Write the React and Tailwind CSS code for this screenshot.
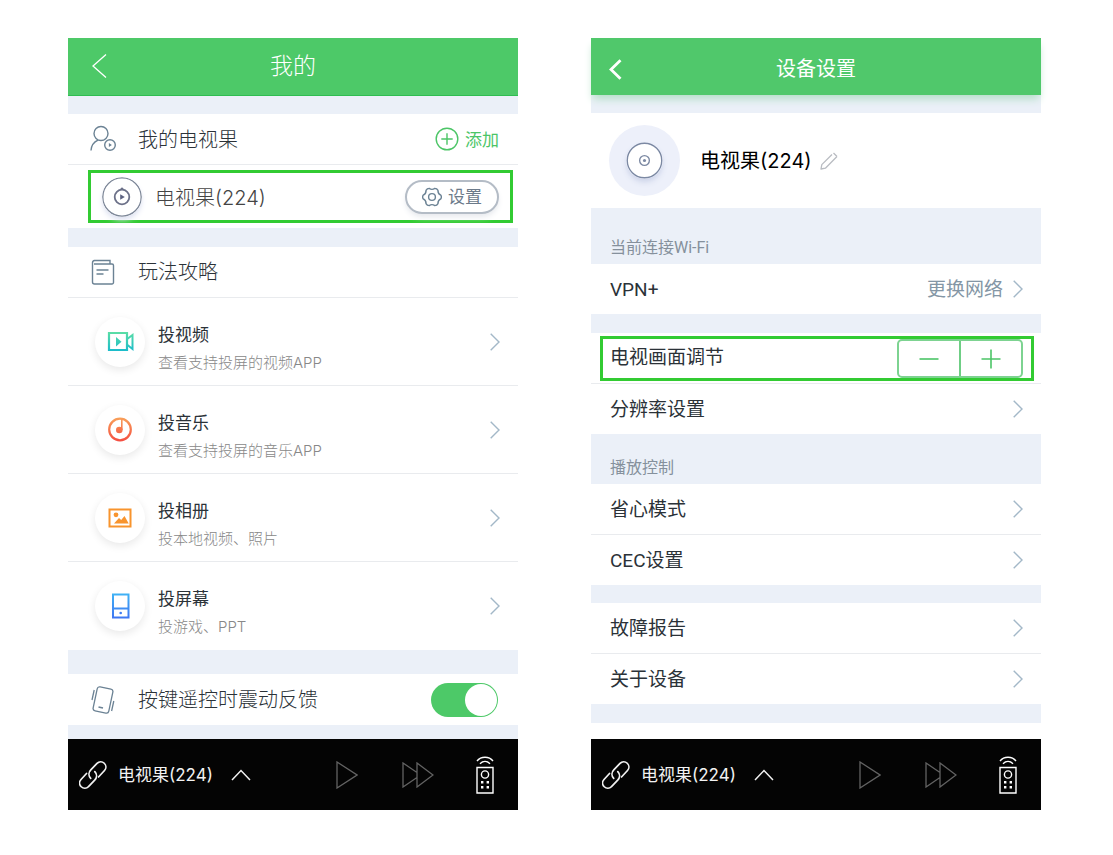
import React, { useState } from "react";

const DEVICE_NAME = "电视果(224)";

const guides = [
  { title: "投视频", desc: "查看支持投屏的视频APP", icon: VideoIcon },
  { title: "投音乐", desc: "查看支持投屏的音乐APP", icon: MusicIcon },
  { title: "投相册", desc: "投本地视频、照片", icon: PhotoIcon },
  { title: "投屏幕", desc: "投游戏、PPT", icon: ScreenIcon },
];

/* Icons */

function ChevronRight() {
  return (
    <svg width="10" height="18" viewBox="0 0 10 18" fill="none" stroke="#a3b8c8" strokeWidth="1.4" className="shrink-0">
      <path d="M0.7 0.8 9 9 0.7 17.2" />
    </svg>
  );
}

function UserIcon() {
  return (
    <svg width="28" height="28" viewBox="0 0 28 28" fill="none" stroke="#6b8294" strokeWidth="1.4">
      <circle cx="11" cy="8.5" r="7" />
      <path d="M1 25.500c.3-5 3-8.600 7-10.400" />
      <circle cx="20" cy="20" r="5.300" />
      <path d="M18.900 18.100v3.800l3-1.900z" fill="#6b8294" stroke="none" />
    </svg>
  );
}

function BookIcon() {
  return (
    <svg width="24" height="26" viewBox="0 0 24 26" fill="none" stroke="#6b8294" strokeWidth="1.4">
      <path d="M19 5V1.500H3.500A2.300 2.300 0 0 0 1.500 3.800V23a2 2 0 0 0 2 2H21a1.500 1.500 0 0 0 1.500-1.500V6.500A1.500 1.500 0 0 0 21 5H3" />
      <path d="M5.500 11h12M5.500 15h7" />
    </svg>
  );
}

function VibrateIcon() {
  return (
    <svg width="24" height="28" viewBox="0 0 24 28" fill="none" stroke="#6b8294" strokeWidth="1.300">
      <rect x="4" y="1.800" width="16" height="24.400" rx="2.500" transform="rotate(12 12 14)" />
      <path d="M7.500 21l4.500 1" strokeWidth="1.600" />
      <path d="M3.200 4 1 14M22.800 15l-2.200 10" />
    </svg>
  );
}

function PlusCircleIcon() {
  return (
    <svg width="24" height="24" viewBox="0 0 24 24" fill="none" stroke="#4cc567" strokeWidth="1.400">
      <circle cx="12" cy="12" r="10.800" />
      <path d="M12 6.300v11.400M6.300 12h11.400" />
    </svg>
  );
}

function GearIcon() {
  return (
    <svg width="20" height="20" viewBox="0 0 20 20" fill="none" stroke="#6b8294" strokeWidth="1.400" strokeLinejoin="round">
      <path d="M18.800 8.100Q19.900 10 18.800 11.900Q15.700 13.300 16 16.700Q14.950 18.600 12.800 18.600Q10 16.600 7.200 18.600Q5.050 18.600 4 16.700Q4.300 13.300 1.200 11.900Q.1 10 1.200 8.100Q4.300 6.700 4 3.300Q5.050 1.400 7.200 1.400Q10 3.400 12.800 1.400Q14.950 1.400 16 3.300Q15.700 6.700 18.800 8.100Z" />
      <circle cx="10" cy="10" r="3.400" />
    </svg>
  );
}

function DiscIcon() {
  return (
    <svg width="40" height="40" viewBox="0 0 40 40" fill="none" className="shrink-0 rounded-full shadow-md shadow-[#dfe3f2]">
      <circle cx="20" cy="20" r="19.200" fill="#fff" stroke="#7d8798" strokeWidth="1.300" />
      <circle cx="20" cy="20" r="7.300" stroke="#6c7189" strokeWidth="1.800" />
      <path d="M18.200 17.200v5.600l4.600-2.800z" fill="#5c6280" />
      <path d="M18.500 12.500 20 11l1.500 1.500" stroke="#6c7189" strokeWidth="1.200" />
    </svg>
  );
}

function VideoIcon() {
  return (
    <svg width="28" height="22" viewBox="0 0 28 22" fill="none">
      <defs>
        <linearGradient id="video" x1="0" y1="0" x2="0" y2="22" gradientUnits="userSpaceOnUse">
          <stop stopColor="#5fe0a3" />
          <stop offset="1" stopColor="#14b8cf" />
        </linearGradient>
      </defs>
      <path d="M3 2h18v17H3z" stroke="url(#video)" strokeWidth="2.200" />
      <path d="M10 6v9.500l5.500-4.700z" fill="url(#video)" />
      <path d="M21.500 7.800 26.500 4v14l-5-4" stroke="url(#video)" strokeWidth="2" />
    </svg>
  );
}

function MusicIcon() {
  return (
    <svg width="26" height="26" viewBox="0 0 26 26" fill="none">
      <defs>
        <linearGradient id="music" x1="0" y1="0" x2="0" y2="26" gradientUnits="userSpaceOnUse">
          <stop stopColor="#f9a35a" />
          <stop offset="1" stopColor="#f4473f" />
        </linearGradient>
      </defs>
      <circle cx="13" cy="12.500" r="10.800" stroke="url(#music)" strokeWidth="2.200" />
      <circle cx="12.300" cy="13" r="3.300" fill="url(#music)" />
      <path d="M14.800 2.500V13" stroke="url(#music)" strokeWidth="1.600" />
    </svg>
  );
}

function PhotoIcon() {
  return (
    <svg width="24" height="20" viewBox="0 0 24 20" fill="none">
      <rect x="1.500" y="1.500" width="21" height="17" stroke="#f8942d" strokeWidth="2" />
      <circle cx="8" cy="6.800" r="2.400" fill="#f8942d" />
      <path d="M6 15.500 11 10l2.200 2L16.500 8l4.200 7.500z" fill="#f8942d" />
    </svg>
  );
}

function ScreenIcon() {
  return (
    <svg width="20" height="26" viewBox="0 0 20 26" fill="none">
      <defs>
        <linearGradient id="screen" x1="0" y1="0" x2="0" y2="26" gradientUnits="userSpaceOnUse">
          <stop stopColor="#3fb4f5" />
          <stop offset="1" stopColor="#3f74f2" />
        </linearGradient>
      </defs>
      <path d="M3 1.500h15.500v23H3zM3 15.500h15.500" stroke="url(#screen)" strokeWidth="2" />
      <circle cx="10.700" cy="20" r="1.300" fill="#3f7df2" />
    </svg>
  );
}

function PencilIcon() {
  return (
    <svg width="18" height="18" viewBox="0 0 18 18" fill="none" stroke="#b9bcc2" strokeWidth="1.300" strokeLinejoin="round">
      <path d="M13.500 1 17 4.500M12 2.500 1.800 12.600 1 17l4.400-.8L15.500 6M15.500 6 17 4.500" />
    </svg>
  );
}

function LinkIcon() {
  return (
    <svg width="28" height="30" viewBox="0 0 28 30" fill="none" stroke="#f2f2f2" strokeWidth="1.700" strokeLinecap="round">
      <path d="M11.700 18.300C9.300 15.800 9.500 12.300 11.800 9.900L18 3.300a5.200 5.200 0 0 1 7.500 7.200L19.500 17" />
      <path d="M15.800 11.700c2.400 2.500 2.200 6-.1 8.400L9.500 26.700A5.200 5.200 0 0 1 2 19.500L7.500 13.500" />
    </svg>
  );
}

/* Shared parts */

function PlayerBar() {
  return (
    <footer className="flex h-[71px] items-center bg-[#040404] pr-6 pl-[11px]">
      <button className="flex items-center gap-[11px] text-[17px] font-normal text-[#f2f2f2]">
        <LinkIcon />
        <span className="pt-0.5">{DEVICE_NAME}</span>
        <svg width="20" height="12" viewBox="0 0 20 12" fill="none" stroke="#f2f2f2" strokeWidth="1.500" className="ml-[7px]">
          <path d="M1 11l9-9.500L19 11" />
        </svg>
      </button>
      <div className="ml-auto flex items-center text-[#636363]">
        <button aria-label="播放">
          <svg width="22" height="28" viewBox="0 0 22 28" fill="none" stroke="currentColor" strokeWidth="1.300">
            <path d="M1 1v26l20-13z" />
          </svg>
        </button>
        <button aria-label="快进" className="ml-11">
          <svg width="32" height="26" viewBox="0 0 32 26" fill="none" stroke="currentColor" strokeWidth="1.300">
            <path d="M15 10.500 1 1v24l14-9.500M15 1v24l16-12z" />
          </svg>
        </button>
        <button aria-label="遥控器" className="ml-[42px] text-white">
          <svg width="18" height="38" viewBox="0 0 18 38" fill="none" stroke="currentColor" strokeWidth="1.400">
            <path d="M1 5c4-5 12-5 16 0M4 7.800c3-3 7-3 10 0" />
            <path d="M1 11.500h16V37H1z" />
            <circle cx="9" cy="18.500" r="3.600" />
            <path d="M5 26.300h2.400M10.600 26.300H13M5 31.300h2.400M10.600 31.300H13" strokeWidth="2.400" />
          </svg>
        </button>
      </div>
    </footer>
  );
}

function NavRow({ label, value, divider }) {
  return (
    <button
      className={`flex w-full items-center justify-between pr-[18px] pl-[19px] font-[Roboto,'Noto_Sans_CJK_SC',sans-serif] text-[19px] ${
        divider ? "h-[51px] border-b border-[#e9ebee]" : "h-[50px]"
      }`}
    >
      <span className="pt-0.5">{label}</span>
      <span className="flex items-center gap-2.5 text-[#8496a5]">
        <span className="pt-0.5">{value}</span>
        <ChevronRight />
      </span>
    </button>
  );
}

function GroupTitle({ children }) {
  return (
    <h2 className="pb-1 pl-[19px] font-[Roboto,'Noto_Sans_CJK_SC',sans-serif] text-[16px] text-[#85909c]">
      {children}
    </h2>
  );
}

function MinePage() {
  const [vibrate, setVibrate] = useState(true);

  return (
    <section className="min-w-0 flex-1 bg-[#ebf0f8] font-light text-[#2b3238]">
      <header className="grid h-[58px] grid-cols-[60px_1fr_60px] items-center border-b border-[#2fbd51] bg-[#4dc968] text-white">
        <button aria-label="返回" className="pb-0.5 pl-6">
          <svg width="15" height="24" viewBox="0 0 15 24" fill="none" stroke="currentColor" strokeWidth="1.300">
            <path d="M14 0.600 1 12l13 11.400" />
          </svg>
        </button>
        <h1 className="text-center text-[23px]">我的</h1>
      </header>

      <div className="mt-[18px] bg-white">
        <div className="flex h-[51px] items-center border-b border-[#e9ebee] pr-[19px] pl-[22px]">
          <UserIcon />
          <h2 className="ml-5 pt-0.5 text-[20px]">我的电视果</h2>
          <button className="ml-auto flex items-center gap-1.5 text-[17px] font-normal text-[#4cc567]">
            <PlusCircleIcon />
            <span className="pt-[3px]">添加</span>
          </button>
        </div>
        <div className="py-[5px] pr-[5px] pl-5">
          <div className="flex h-[53px] items-center border-3 border-[#32cb32] pr-[11px] pl-[11px]">
            <DiscIcon />
            <span className="ml-[13px] pt-0.5 text-[20px] text-[#444]">{DEVICE_NAME}</span>
            <button className="ml-auto flex h-[34px] w-[94px] items-center justify-center gap-1.5 rounded-full border-2 border-[#b4bcc6] text-[17px] font-normal text-[#6b7a8a] shadow-md shadow-[#e9ebef]">
              <GearIcon />
              <span className="pt-0.5">设置</span>
            </button>
          </div>
        </div>
      </div>

      <div className="mt-[19px] bg-white">
        <div className="flex h-[51px] items-center border-b border-[#e9ebee] pl-[23px]">
          <BookIcon />
          <h2 className="ml-[23px] text-[20px]">玩法攻略</h2>
        </div>
        {guides.map(({ title, desc, icon: Icon }) => (
          <button
            key={title}
            className="flex h-[88px] w-full items-center border-b border-[#e9ebee] pr-[18px] pl-[27px] text-left last:border-b-0"
          >
            <span className="flex size-[50px] items-center justify-center rounded-full bg-white shadow-[0_3px_8px_#e9e9e9]">
              <Icon />
            </span>
            <span className="ml-[13px] pt-3.5">
              <span className="block text-[17px] leading-7 font-normal">{title}</span>
              <span className="block text-[15px] leading-7 text-[#888]">{desc}</span>
            </span>
            <span className="ml-auto">
              <ChevronRight />
            </span>
          </button>
        ))}
      </div>

      <label className="mt-6 mb-3.5 flex h-[51px] items-center bg-white pr-5 pl-[23px]">
        <VibrateIcon />
        <span className="ml-[23px] text-[20px]">按键遥控时震动反馈</span>
        <input
          type="checkbox"
          checked={vibrate}
          onChange={(e) => setVibrate(e.target.checked)}
          className="ml-auto flex h-[34px] w-[67px] appearance-none items-center rounded-full bg-gray-300 p-px before:size-8 before:rounded-full before:bg-white checked:justify-end checked:bg-[#4dc968]"
        />
      </label>
      <PlayerBar />
    </section>
  );
}

function DevicePage() {
  return (
    <section className="min-w-0 flex-1 bg-[#ebf0f8] text-[#2b3238]">
      <header className="grid h-[57px] grid-cols-[60px_1fr_60px] items-center bg-[#50c86b] pt-1 text-white shadow-[0_6px_8px_-2px_#b5dfc8]">
        <button aria-label="返回" className="pt-0.5 pl-[18px]">
          <svg width="13" height="21" viewBox="0 0 13 21" fill="none" stroke="currentColor" strokeWidth="2.800">
            <path d="M11.500 1.200 2 10.500l9.500 9.300" />
          </svg>
        </button>
        <h1 className="text-center text-[20px]">设备设置</h1>
      </header>

      <div className="mt-[18px] flex h-[95px] items-center bg-white pl-[18px] text-black">
        <span className="flex size-[71px] items-center justify-center rounded-full bg-[#edf0fa]">
          <svg width="37" height="37" viewBox="0 0 38 38" fill="none" stroke="#7c89a3" className="rounded-full shadow-md shadow-[#cfd6ea]">
            <circle cx="19" cy="19" r="17.700" fill="#fff" strokeWidth="1.400" />
            <circle cx="19" cy="19" r="5" strokeWidth="1.400" />
            <circle cx="19" cy="19" r="1.600" fill="#7c89a3" stroke="none" />
          </svg>
        </span>
        <span className="ml-5 text-[20px]">{DEVICE_NAME}</span>
        <button aria-label="重命名" className="ml-2">
          <PencilIcon />
        </button>
      </div>

      <div className="flex h-14 items-end">
        <GroupTitle>当前连接Wi-Fi</GroupTitle>
      </div>
      <div className="bg-white">
        <NavRow label="VPN+" value="更换网络" />
      </div>

      <div className="mt-[19px] bg-white">
        <div className="border-b border-[#e9ebee] pt-[3px] pr-[7px] pb-0.5 pl-[9px]">
          <div className="flex h-[45px] items-center justify-between border-3 border-[#32cb32] pr-2 pl-[7px]">
            <span className="text-[19px]">电视画面调节</span>
            <div className="flex h-full w-[126px] divide-x-2 divide-[#6fce85] rounded-[5px] border-2 border-[#7dd391] text-[#4cc567]">
              <button aria-label="缩小" className="flex flex-1 items-center justify-center">
                <svg width="20" height="20" viewBox="0 0 20 20" stroke="currentColor" strokeWidth="1.600">
                  <path d="M0.500 10h19" />
                </svg>
              </button>
              <button aria-label="放大" className="flex flex-1 items-center justify-center">
                <svg width="20" height="20" viewBox="0 0 20 20" stroke="currentColor" strokeWidth="1.600">
                  <path d="M0.500 10h19M10 0.500v19" />
                </svg>
              </button>
            </div>
          </div>
        </div>
        <NavRow label="分辨率设置" />
      </div>

      <div className="flex h-[50px] items-end">
        <GroupTitle>播放控制</GroupTitle>
      </div>
      <div className="bg-white">
        <NavRow label="省心模式" divider />
        <NavRow label="CEC设置" />
      </div>

      <div className="mt-[18px] bg-white">
        <NavRow label="故障报告" divider />
        <NavRow label="关于设备" />
      </div>
      <div className="mt-[19px] h-4 bg-white" />
      <PlayerBar />
    </section>
  );
}

export default function App() {
  return (
    <main className="flex items-start gap-[73px] bg-white pt-[38px] pr-[72px] pb-[45px] pl-[68px] font-[Inter,'Noto_Sans_CJK_SC',sans-serif]">
      <MinePage />
      <DevicePage />
    </main>
  );
}
